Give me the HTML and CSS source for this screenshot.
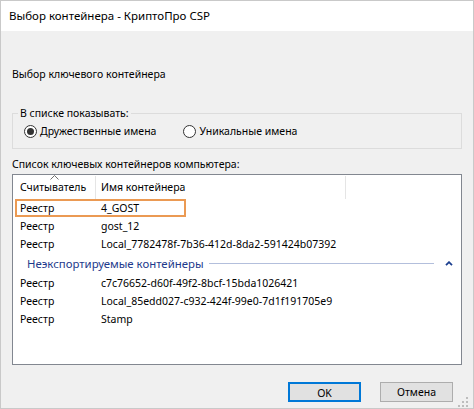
FILE: index.html
```html
<!DOCTYPE html>
<html lang="ru">
<head>
<meta charset="utf-8">
<title>Выбор контейнера - КриптоПро CSP</title>
<link rel="stylesheet" href="styles.css">
</head>
<body>
<div class="window">
  <div class="titlebar">Выбор контейнера - КриптоПро CSP</div>
  <div class="content">
    <div class="intro">Выбор ключевого контейнера</div>
    <fieldset class="group">
      <legend>В списке показывать:</legend>
      <div class="radios">
        <label class="radio"><span class="circle checked"></span><span>Дружественные имена</span></label>
        <label class="radio"><span class="circle"></span><span>Уникальные имена</span></label>
      </div>
    </fieldset>
    <div class="list-label">Список ключевых контейнеров компьютера:</div>
    <div class="listbox">
      <div class="header">
        <div class="hcell hcol1">Считыватель
          <svg class="sort" width="9" height="5" viewBox="0 0 9 5"><polyline points="0.5,4.5 4.5,0.5 8.5,4.5" fill="none" stroke="#6f6f6f" stroke-width="1"/></svg>
        </div>
        <div class="hcell hcol2">Имя контейнера</div>
        <div class="hcell hcol3"></div>
      </div>
      <div class="row"><div class="item selected"><span class="c1">Реестр</span><span class="c2">4_GOST</span></div></div>
      <div class="row"><div class="item"><span class="c1">Реестр</span><span class="c2">gost_12</span></div></div>
      <div class="row"><div class="item"><span class="c1">Реестр</span><span class="c2">Local_7782478f-7b36-412d-8da2-591424b07392</span></div></div>
      <div class="group-head">
        <span class="group-title">Неэкспортируемые контейнеры</span>
        <span class="group-line"></span>
        <svg class="chev" width="8" height="5" viewBox="0 0 8 5"><polyline points="1,4.2 4,1.2 7,4.2" fill="none" stroke="#1b3f8f" stroke-width="1.8"/></svg>
      </div>
      <div class="row"><div class="item"><span class="c1">Реестр</span><span class="c2">c7c76652-d60f-49f2-8bcf-15bda1026421</span></div></div>
      <div class="row"><div class="item"><span class="c1">Реестр</span><span class="c2">Local_85edd027-c932-424f-99e0-7d1f191705e9</span></div></div>
      <div class="row"><div class="item"><span class="c1">Реестр</span><span class="c2">Stamp</span></div></div>
    </div>
    <div class="buttons">
      <button class="btn default">OK</button>
      <button class="btn">Отмена</button>
    </div>
  </div>
  <svg class="grip" width="12" height="10" viewBox="0 0 12 10">
    <rect x="8" y="0" width="2" height="2" fill="#bdbdbd"/>
    <rect x="4" y="4" width="2" height="2" fill="#bdbdbd"/>
    <rect x="8" y="4" width="2" height="2" fill="#bdbdbd"/>
    <rect x="0" y="8" width="2" height="2" fill="#bdbdbd"/>
    <rect x="4" y="8" width="2" height="2" fill="#bdbdbd"/>
    <rect x="8" y="8" width="2" height="2" fill="#bdbdbd"/>
  </svg>
</div>
</body>
</html>
```
FILE: styles.css
```css
* { box-sizing: border-box; }
html, body { margin: 0; padding: 0; background: #f0f0f0; }
body {
  font-family: "Noto Sans", "Open Sans", sans-serif;
  font-size: 10.5px;
  color: #000;
}
.window {
  position: relative;
  width: 474px;
  height: 409px;
  border: 1px solid #c9c9c9;
  background: #f0f0f0;
}
.titlebar {
  height: 30px;
  line-height: 30px;
  background: #fff;
  padding-left: 8px;
  font-size: 11.5px;
  white-space: nowrap;
}
.content {
  padding: 0 20px 0 11px;
}
.intro {
  margin-top: 35px;
  line-height: 16px;
}
.group {
  margin: 24px 0 0 0;
  width: 450px;
  border: 1px solid #dcdcdc;
  padding: 2px 5px 9px 5px;
  min-width: 0;
}
.group legend {
  padding: 0 2px;
  line-height: 15px;
  height: 15px;
}
.radios {
  display: flex;
  height: 16px;
  align-items: center;
  padding-left: 6px;
}
.radio {
  display: flex;
  align-items: center;
  line-height: 16px;
  white-space: nowrap;
}
.radio + .radio { margin-left: 27px; }
.circle {
  width: 13px;
  height: 13px;
  border: 1px solid #333;
  border-radius: 50%;
  background: #fff;
  margin-right: 3px;
  position: relative;
  flex: none;
}
.circle.checked::after {
  content: "";
  position: absolute;
  left: 2px;
  top: 2px;
  width: 7px;
  height: 7px;
  border-radius: 50%;
  background: #333;
}
.list-label {
  margin-top: 7px;
  line-height: 16px;
}
.listbox {
  margin-top: 2px;
  width: 450px;
  height: 191px;
  border: 1px solid #828790;
  background: #fff;
  overflow: hidden;
}
.header {
  display: flex;
  height: 24px;
}
.hcell {
  position: relative;
  line-height: 24px;
  white-space: nowrap;
}
.hcol1 {
  width: 83px;
  padding-left: 7px;
  border-right: 1px solid #e5e5e5;
  margin-top: 1px;
  line-height: 23px;
}
.hcol2 {
  width: 250px;
  padding-left: 5px;
  border-right: 1px solid #e5e5e5;
  margin-top: 1px;
  line-height: 23px;
}
.hcol3 { flex: 1; }
.sort {
  position: absolute;
  left: 37px;
  top: -1px;
}
.row {
  height: 18px;
  padding-left: 2px;
}
.item {
  display: flex;
  width: 171px;
  height: 18px;
  border: 2px solid transparent;
  line-height: 14px;
  white-space: nowrap;
}
.item.selected { border-color: #eb9a53; }
.c1 { width: 84px; padding-left: 3px; flex: none; }
.c2 { flex: none; }
.group-head {
  display: flex;
  align-items: center;
  height: 21px;
  padding: 0 8px 0 14px;
}
.group-title {
  font-size: 11.4px;
  color: #1e3a8c;
  white-space: nowrap;
  line-height: 20px;
}
.group-line {
  flex: 1;
  height: 1px;
  background: #b3bfdc;
  margin: 0 11px 0 5px;
}
.chev { flex: none; }
.buttons {
  display: flex;
  justify-content: flex-end;
  gap: 19px;
  margin-top: 17px;
}
.btn {
  width: 73px;
  height: 20px;
  border: 1px solid #adadad;
  background: #e1e1e1;
  font-family: inherit;
  font-size: 10.5px;
  color: #000;
  padding: 0;
  line-height: 18px;
}
.btn.default {
  border: 2px solid #0078d7;
}
.grip {
  position: absolute;
  right: 3px;
  bottom: 1px;
}
```
